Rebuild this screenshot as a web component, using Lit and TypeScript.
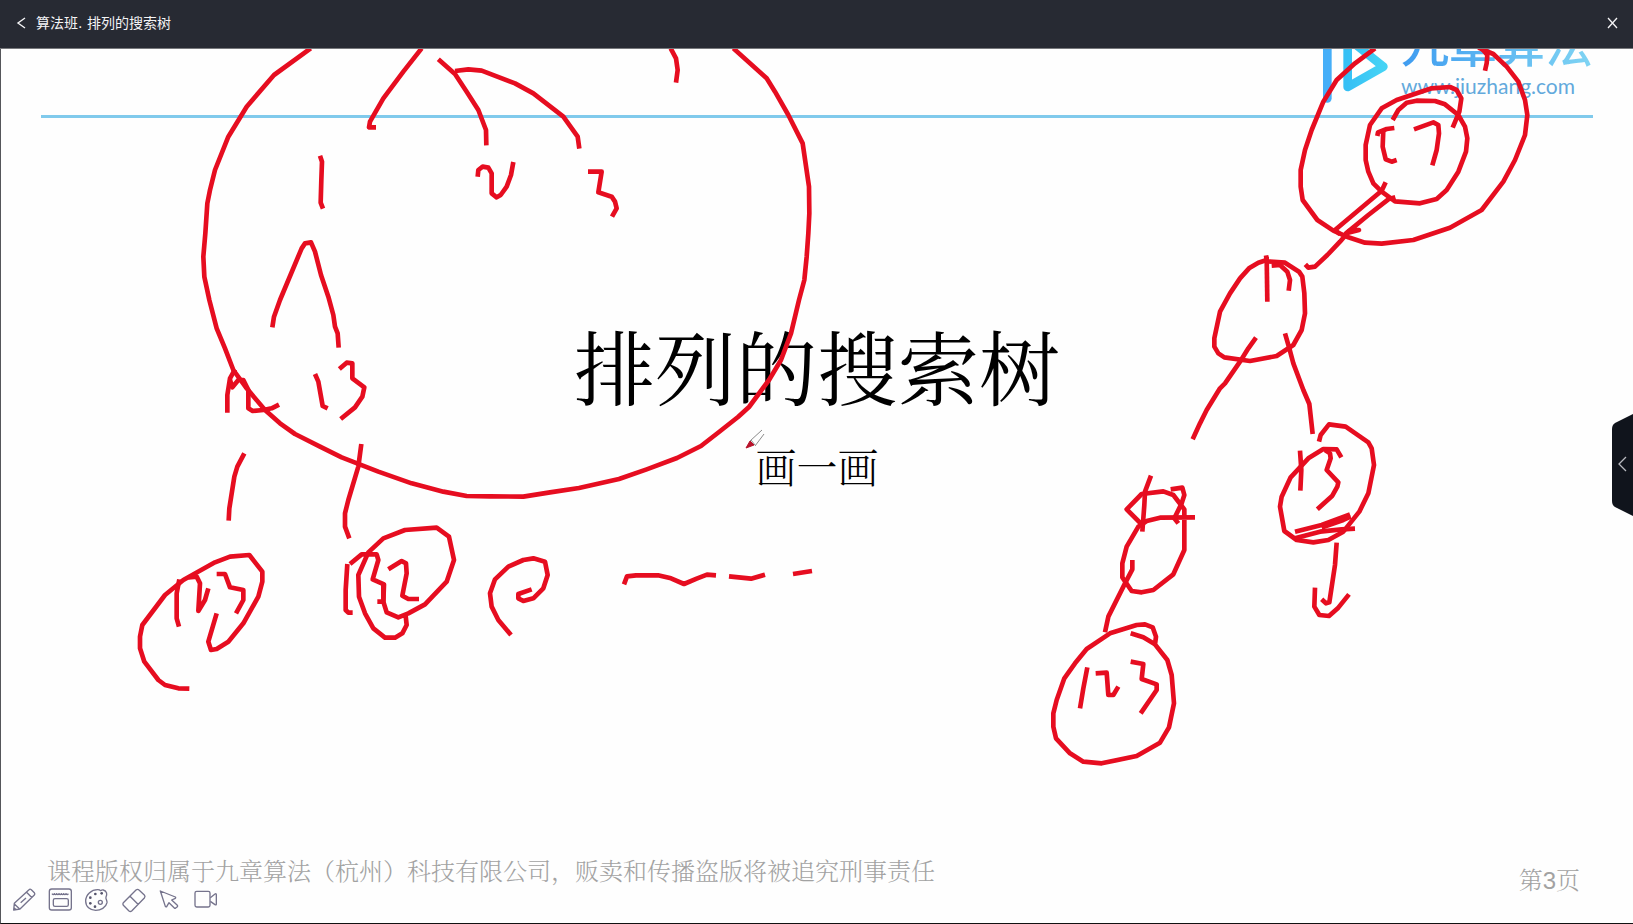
import { LitElement, html, svg, css } from "lit";
import { customElement } from "lit/decorators.js";

interface Patch {
  x: number;
  y: number;
  strokes: string[];
}

// Pen strokes, grouped by area of the board. Points are in thirds of a board unit.
const INK: Patch[] = [
  {
    x: 0,
    y: 0,
    strokes: [
      "932,145 822,225 740,320 685,410 645,510 630,570 622,610 616,700 610,770 613,830 628,900 650,985 675,1045 700,1110 740,1165 795,1230 840,1270 885,1302 960,1340 1025,1372 1135,1415 1235,1450 1330,1475 1400,1488 1470,1489 1570,1490 1650,1477 1737,1464 1857,1437 1940,1408 2031,1374 2103,1338 2157,1296 2214,1251 2247,1221 2307,1140 2343,1080 2373,1000 2397,900 2413,840 2420,770 2425,700 2428,640 2427,560 2408,430 2365,345 2325,275 2300,235 2200,145",
      "1265,145 1210,215 1150,295 1110,365 1107,382 1128,382",
      "960,467 966,485 964,540 962,608 969,626",
      "817,982 822,950 840,900 905,745 915,730 933,727 945,755 963,825 985,890 1000,945 1005,980 1013,1000 1016,1043",
      "1872,1753 1881,1729 1908,1726 1974,1726 2013,1735 2052,1752 2090,1736 2121,1724 2148,1726",
      "2187,1729 2253,1736 2295,1724",
      "2379,1722 2436,1713",
    ],
  },
  {
    x: 400,
    y: 0,
    strokes: [
      "115,178 165,222 200,275 235,330 258,390 259,436",
      "165,213 205,208 245,212 345,250 400,280 490,350 533,410 538,446",
      "233,530 235,510 248,500 265,503 275,520 275,580 290,592 302,585 320,560 333,525 340,486",
      "564,515 605,515 595,577 635,590 645,605 650,625 636,650",
      "812,145 828,175 833,210 828,248",
    ],
  },
  {
    x: 1240,
    y: 0,
    strokes: [
      "405,145 345,190 290,240 250,305 215,390 195,450 182,510 182,560 188,600 232,660 280,692 325,712 375,728 425,731 520,720 630,683 725,630 790,545 825,480 855,405 862,345 855,300 835,245 800,200 760,162 715,143",
      "725,145 742,165 740,190 735,212",
      "458,360 475,330 500,308 530,302 585,303 615,313 655,345 675,380 682,415 678,455 655,515 620,570 590,597 540,610 465,604 425,575 400,550 385,515 377,480 377,435 390,375 425,325 470,300 575,265 630,261 650,270 664,295 658,335 638,383",
      "412,408 414,397 440,387 463,384",
      "430,388 428,440 437,478 455,485 470,480",
      "522,388 580,367 595,375 597,400 590,450 577,496",
      "437,547 425,572 285,690 300,703",
      "466,592 445,598 385,645 318,700 357,690 335,688",
      "330,690 300,725 262,765 225,800 205,803 196,793",
    ],
  },
  {
    x: 1180,
    y: 230,
    strokes: [
      "258,76 260,90 235,98 207,115 180,145 150,190 120,245 103,325 103,350 115,370 133,382 210,393 290,378 340,345 365,300 375,250 373,190 367,140 357,125 315,98 265,94",
      "260,80 262,215",
      "275,107 300,105 322,125 330,150 326,182",
      "228,323 205,355 180,395 135,460 120,475 80,540 60,580 38,628",
      "315,310 328,355 340,400 370,480 388,522 398,612",
      "417,635 422,615 447,583 497,590 565,637 575,655 582,705 565,790 538,845 490,905 445,930 400,937 350,930 313,903 300,830 305,800 332,742 385,685 430,657 470,658 484,682",
      "360,662 364,720 361,782",
      "435,660 450,670 452,685 440,720 475,757 472,770 457,797 412,838",
      "345,905 425,885 510,853",
      "425,893 490,870 512,860",
      "345,925 420,905 485,898 525,896",
    ],
  },
  {
    x: 1030,
    y: 440,
    strokes: [
      "363,107 345,155 343,195 337,275",
      "337,255 290,208 335,162 400,154 430,165 463,208 463,330 430,403 370,450 335,457 305,453 277,412 277,370 290,320 325,260 350,243 390,233 495,232",
      "422,148 457,143 463,165 455,190 433,235 445,250",
      "307,360 307,388 285,430 235,530 225,577",
      "302,580 340,592 375,613 378,590 368,562 345,553 320,555 240,580 170,627 135,670 103,715 80,780 70,820 70,860 78,895 120,940 160,965 215,970 320,948 390,908 417,862 432,790 425,705 412,660 375,613",
      "172,682 160,745 150,805",
      "197,700 230,698 235,765 250,765 265,740",
      "302,665 340,672 335,717 380,733 380,750 332,820",
      "920,308 915,375 898,487 888,490 875,478",
      "855,443 853,500 868,525 897,528 925,503 957,463",
    ],
  },
  {
    x: 100,
    y: 300,
    strokes: [
      "382,338 382,285 390,235 405,208",
      "390,240 397,262 415,240 430,240 445,270 445,325 458,333 490,330 515,325 537,314",
      "645,222 655,245 668,318 683,325",
      "718,207 740,188 757,190 757,235 793,262 787,290 765,322 722,357",
      "433,460 412,500 403,530 388,625 386,662",
      "784,432 775,500 745,600 735,640 735,680 748,715",
      "268,1166 235,1165 195,1155 175,1140 133,1085 120,1045 120,1010 127,975 195,885 250,840 345,787 390,770 448,765 487,815 487,845 475,890 430,970 385,1025 350,1047 333,1050 325,1025 350,940",
      "238,838 230,880 230,955 237,980",
      "265,832 290,830 300,850 295,933 315,900 325,865",
      "350,822 375,822 390,862 430,870 430,900 408,940",
      "742,792 737,870 737,930 745,938 758,938",
      "750,792 785,763 830,763 835,780 818,838 852,853 850,905 832,905",
      "850,855 850,905 860,937 895,952 925,940 975,913 1040,845 1062,780 1047,710 1010,683 915,690 850,715 805,757 775,825 777,890 795,940 820,985 855,1013 885,1013 907,1000 920,975 917,948",
      "865,808 905,783 918,790 920,820 907,887 925,897 957,897",
      "1233,1005 1195,960 1175,920 1170,880 1185,838 1225,800 1270,780 1300,775 1335,785 1343,825 1330,865 1300,895 1270,903 1255,895 1255,882 1295,868",
    ],
  },
];

const TOOLS = [
  {
    label: "画笔",
    art: svg`<path d="M5 66 L7 46 L51 5 Q54 2 58 5 L67 14 Q70 18 67 21 L24 63 Z M43 12 L60 29 M7 48 L23 63 M5 66 l7 -1 l-6 -6z M26 44 L42 30"/>`,
  },
  {
    label: "白板",
    art: svg`<rect x="4" y="3" width="66" height="63" rx="7"/><rect x="16" y="32" width="45" height="23" rx="5"/><path d="M12 17 q4 6 7 0 q4 6 7 0 q4 6 7 0 q4 6 7 0 q4 6 7 0 q4 6 7 0 q4 6 7 0"/>`,
  },
  {
    label: "调色板",
    art: svg`<path d="M58 6 C69 9 70 19 66 27 C64 33 70 37 69 44 C66 59 50 67 35 67 C18 67 5 56 5 39 C5 20 22 5 41 5 Q47 5 50 8 Q54 5 58 6Z"/><circle cx="49" cy="43" r="6"/><g class="dots"><circle cx="19" cy="29" r="4"/><circle cx="34" cy="18" r="4"/><circle cx="53" cy="16" r="4"/><circle cx="19" cy="46" r="4"/><circle cx="33" cy="56" r="4"/></g>`,
  },
  {
    label: "橡皮擦",
    art: svg`<path d="M10 44 L48 6 Q53 2 57 6 L73 21 Q77 25 73 30 L35 69 Q31 72 27 69 L10 52 Q7 48 10 44Z M30 25 L54 49"/>`,
  },
  {
    label: "选择",
    art: svg`<path d="M13 9 L58 27 Q60 29 58 31 L47 36 L64 52 Q66 54 64 56 L59 60 Q57 62 55 60 L39 44 L32 56 Q30 58 28 55Z"/>`,
  },
  {
    label: "摄像头",
    art: svg`<rect x="9" y="10" width="45" height="47" rx="5"/><path d="M55 29 L69 18 Q73 16 73 20 V48 Q73 52 69 50 L55 40"/>`,
  },
];

@customElement("app-root")
export class AppRoot extends LitElement {
  static styles = css`
    :host {
      display: flex;
      flex-direction: column;
      height: 100vh;
      box-sizing: border-box;
      overflow: hidden;
      background: #fefefe;
      font-family: "DejaVu Sans", "Noto Sans CJK SC", sans-serif;
      --serif: "Noto Serif CJK SC", "Songti SC", SimSun, "Noto Sans CJK SC",
        serif;
    }
    h1,
    h2,
    p {
      margin: 0;
      font-weight: 300;
    }
    button {
      display: grid;
      place-items: center;
      padding: 0;
      border: 0;
      background: none;
      color: inherit;
      font: inherit;
      cursor: pointer;
    }
    svg {
      display: block;
      fill: none;
      stroke: currentColor;
    }
    .topbar {
      display: flex;
      align-items: center;
      justify-content: space-between;
      height: 46px;
      flex: none;
      padding: 0 11px 2px 12px;
      background: #272a33;
      border-bottom: 1px solid #77787c;
      color: #f4f4f6;
    }
    .back {
      display: flex;
      align-items: center;
      gap: 6px;
      font-size: 14px;
      line-height: 20px;
    }
    .close {
      width: 20px;
      height: 20px;
    }
    .stage {
      position: relative;
      display: flex;
      flex: 1;
      min-height: 0;
      overflow: hidden;
      border-left: 1px solid #55565a;
      border-bottom: 1px solid #111;
    }
    .slide {
      display: flex;
      flex: 1;
      flex-direction: column;
      min-width: 0;
      padding: 0 40px 26px;
    }
    .brand {
      display: flex;
      align-items: flex-end;
      justify-content: flex-end;
      gap: 12px;
      height: 66px;
      flex: none;
      border-bottom: 3px solid #80caec;
    }
    .mark {
      flex: none;
      margin-bottom: 12px;
    }
    .words {
      display: flex;
      flex-direction: column;
      gap: 6px;
      padding-bottom: 16px;
    }
    .name {
      font-family: "Noto Sans CJK SC", sans-serif;
      font-size: 48px;
      line-height: 52px;
      font-weight: 500;
      color: transparent;
      background: linear-gradient(90deg, #3f9cf0, #7fd4f3);
      background-clip: text;
      -webkit-background-clip: text;
    }
    .site {
      font: 21px/26px Lato, sans-serif;
      color: #62a9dc;
    }
    .lead {
      display: flex;
      flex: 1;
      flex-direction: column;
      align-items: center;
      justify-content: center;
      gap: 30px;
      padding-bottom: 166px;
      font-family: var(--serif);
      color: #000;
      white-space: nowrap;
    }
    .title {
      font-size: 81px;
      font-weight: 400;
      line-height: 96px;
    }
    .subtitle {
      font-size: 41px;
      line-height: 48px;
    }
    .foot {
      display: flex;
      justify-content: space-between;
      height: 43px;
      padding: 0 13px 0 6px;
      font-family: var(--serif);
      font-size: 24px;
      line-height: 32px;
      color: #a2a2a2;
      white-space: nowrap;
    }
    .page {
      align-self: flex-end;
    }
    .num {
      font-family: "Liberation Sans", sans-serif;
    }
    .ink {
      position: absolute;
      inset: 0;
      width: 100%;
      height: 100%;
      pointer-events: none;
      color: #e60d20;
    }
    .tools {
      position: absolute;
      left: 11px;
      bottom: 11px;
      display: flex;
      gap: 12px;
      color: #75738c;
    }
    .tools svg {
      stroke-width: 4;
      stroke-linejoin: round;
      overflow: visible;
    }
    .dots {
      fill: #55546c;
      stroke: none;
    }
    .drawer {
      position: absolute;
      right: 0;
      top: 365px;
      color: #b9bac0;
    }
  `;

  render() {
    return html`
      <header class="topbar">
        <button class="back">
          <svg width="18" height="20" viewBox="0 0 18 20" aria-hidden="true">
            <path d="M13 5 L6 10 L13 15" stroke-width="1.4" />
          </svg>
          <span>算法班. 排列的搜索树</span>
        </button>
        <button class="close" aria-label="关闭">
          <svg width="20" height="20" viewBox="0 0 20 20" aria-hidden="true">
            <path d="M6 5 L15 15 M15 5 L6 15" stroke-width="1.3" />
          </svg>
        </button>
      </header>
      <main class="stage">
        <section class="slide">
          <div class="brand">
            <svg
              class="mark"
              width="66"
              height="60"
              viewBox="0 0 198 180"
              stroke-linejoin="round"
              stroke-linecap="round"
              aria-hidden="true"
            >
              <defs>
                <linearGradient id="sky" x1="0" y1="0" x2="1" y2="0">
                  <stop offset="0" stop-color="#36c0f5" />
                  <stop offset="1" stop-color="#45d3f5" />
                </linearGradient>
              </defs>
              <path d="M13 6 V166" stroke="#45aef8" stroke-width="26" />
              <path
                d="M74 10 V132 L181 71 L95 2"
                stroke="url(#sky)"
                stroke-width="26"
              />
            </svg>
            <div class="words">
              <span class="name">九章算法</span>
              <span class="site">www.jiuzhang.com</span>
            </div>
          </div>
          <div class="lead">
            <h1 class="title">排列的搜索树</h1>
            <h2 class="subtitle">画一画</h2>
          </div>
          <footer class="foot">
            <p>课程版权归属于九章算法（杭州）科技有限公司，贩卖和传播盗版将被追究刑事责任</p>
            <p class="page">第<span class="num">3</span>页</p>
          </footer>
        </section>
        <svg class="ink" viewBox="1 49 1632 874" aria-hidden="true">
          ${INK.map(
            (patch) => svg`
              <g transform=${`translate(${patch.x} ${patch.y}) scale(${1 / 3})`} stroke-width="14" stroke-linejoin="round">
                ${patch.strokes.map((points) => svg`<polyline points=${points} />`)}
              </g>`
          )}
          <g stroke="#8a8a8a" stroke-width="1">
            <path d="M750 441 L762 430 M755 446 L764 434 M751 440 L755 445" />
            <path d="M750 441 L754 445 L746 448 Z" fill="#b8122a" stroke="#b8122a" />
          </g>
        </svg>
        <nav class="tools" aria-label="工具">
          ${TOOLS.map(
            (tool) => html`
              <button aria-label=${tool.label}>
                <svg width="24" height="24" viewBox="0 0 72 72" aria-hidden="true">${tool.art}</svg>
              </button>
            `
          )}
        </nav>
        <button class="drawer" aria-label="展开侧栏">
          <svg width="21" height="102" viewBox="0 0 21 102" aria-hidden="true">
            <path
              d="M21 0 L3 9 Q0 11 0 15 V87 Q0 91 3 93 L21 102 Z"
              fill="#10141c"
              stroke="none"
            />
            <path d="M14 43 L7 50 L14 57" stroke-width="1.3" />
          </svg>
        </button>
      </main>
    `;
  }
}
